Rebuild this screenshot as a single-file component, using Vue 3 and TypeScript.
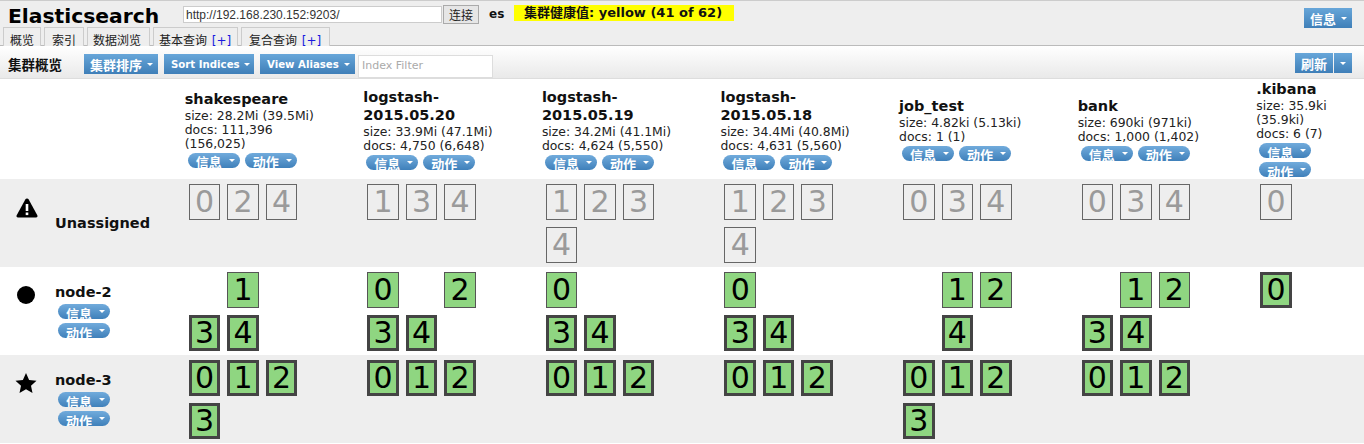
<script setup lang="ts">
type Shard = { n: number; primary?: boolean } | null;
interface Index { name: string[]; size: string; docs: string; stack?: boolean }
const indices: Index[] = [
  { name: ['shakespeare'], size: 'size: 28.2Mi (39.5Mi)', docs: 'docs: 111,396 (156,025)' },
  { name: ['logstash-', '2015.05.20'], size: 'size: 33.9Mi (47.1Mi)', docs: 'docs: 4,750 (6,648)' },
  { name: ['logstash-', '2015.05.19'], size: 'size: 34.2Mi (41.1Mi)', docs: 'docs: 4,624 (5,550)' },
  { name: ['logstash-', '2015.05.18'], size: 'size: 34.4Mi (40.8Mi)', docs: 'docs: 4,631 (5,560)' },
  { name: ['job_test'], size: 'size: 4.82ki (5.13ki)', docs: 'docs: 1 (1)' },
  { name: ['bank'], size: 'size: 690ki (971ki)', docs: 'docs: 1,000 (1,402)' },
  { name: ['.kibana'], size: 'size: 35.9ki (35.9ki)', docs: 'docs: 6 (7)', stack: true },
];
const s = (n: number): Shard => ({ n });
const p = (n: number): Shard => ({ n, primary: true });
const rows: { label: string; kind: string; actions: boolean; cells: Shard[][]; unassigned?: boolean }[] = [
  {
    label: 'Unassigned', kind: 'warn', actions: false, unassigned: true,
    cells: [
      [s(0), s(2), s(4)], [s(1), s(3), s(4)], [s(1), s(2), s(3), s(4)], [s(1), s(2), s(3), s(4)],
      [s(0), s(3), s(4)], [s(0), s(3), s(4)], [s(0)],
    ],
  },
  {
    label: 'node-2', kind: 'circle', actions: true,
    cells: [
      [null, s(1), null, p(3), p(4)], [s(0), null, s(2), p(3), p(4)], [s(0), null, null, p(3), p(4)],
      [s(0), null, null, p(3), p(4)], [null, s(1), s(2), null, p(4)], [null, s(1), s(2), p(3), p(4)], [p(0)],
    ],
  },
  {
    label: 'node-3', kind: 'star', actions: true,
    cells: [
      [p(0), p(1), p(2), p(3)], [p(0), p(1), p(2)], [p(0), p(1), p(2)], [p(0), p(1), p(2)],
      [p(0), p(1), p(2), p(3)], [p(0), p(1), p(2)], [],
    ],
  },
];
</script>

<template>
  <div class="page">
    <header class="top">
      <div class="top-row">
        <h1 class="title">Elasticsearch</h1>
        <input class="url" value="http://192.168.230.152:9203/" />
        <button class="connect">连接</button>
        <span class="cluster">es</span>
        <span class="health">集群健康值: yellow (41 of 62)</span>
        <button class="tb cjk info-top">信息<i class="caret"></i></button>
      </div>
      <nav class="tabs">
        <span class="tab active">概览</span>
        <span class="tab">索引</span>
        <span class="tab">数据浏览</span>
        <span class="tab">基本查询 <b>[+]</b></span>
        <span class="tab">复合查询 <b>[+]</b></span>
      </nav>
    </header>

    <div class="toolbar">
      <strong class="tool-title">集群概览</strong>
      <button class="tb cjk">集群排序<i class="caret"></i></button>
      <button class="tb">Sort Indices<i class="caret"></i></button>
      <button class="tb">View Aliases<i class="caret"></i></button>
      <input class="filter" placeholder="Index Filter" />
      <div class="refresh">
        <button class="tb cjk split-l">刷新</button>
        <button class="tb split-r"><i class="caret flush"></i></button>
      </div>
    </div>

    <div class="grid head">
      <div></div>
      <div></div>
      <div v-for="ix in indices" :key="ix.name.join('')" class="ix" :class="{ last: ix.stack }">
        <h3 class="ix-name"><span v-for="part in ix.name" :key="part" class="part">{{ part }}</span></h3>
        <div class="ix-line">{{ ix.size }}</div>
        <div class="ix-line">{{ ix.docs }}</div>
        <div class="pills" :class="{ stack: ix.stack }">
          <span class="pill"><span class="pill-text">信息</span><i class="caret"></i></span>
          <span class="pill"><span class="pill-text">动作</span><i class="caret"></i></span>
        </div>
      </div>
    </div>

    <div v-for="(row, ri) in rows" :key="row.label" class="grid row" :class="{ tint: ri !== 1 }">
      <div class="icon-cell">
        <svg v-if="row.kind === 'warn'" width="22" height="20" viewBox="0 0 22 20">
          <path d="M11 0.5c.8 0 1.3.4 1.7 1.1l8.6 15.6c.6 1.1 0 2.3-1.3 2.3H2c-1.3 0-1.9-1.2-1.3-2.3L9.300 1.600C9.700.9 10.200.5 11 .5z" fill="#000" />
          <rect x="9.700" y="6" width="2.600" height="7" fill="#fff" />
          <rect x="9.700" y="14.500" width="2.600" height="2.600" fill="#fff" />
        </svg>
        <svg v-else-if="row.kind === 'circle'" class="ico-circle" width="18" height="18" viewBox="0 0 18 18">
          <circle cx="9" cy="9" r="9" fill="#000" />
        </svg>
        <svg v-else class="ico-star" width="22" height="20" viewBox="0 0 22 20">
          <path d="M11 0l3.100 6.900 7.400.8-5.500 5 1.500 7.300L11 16.300 4.500 20 6 12.700l-5.500-5 7.400-.8z" fill="#000" />
        </svg>
      </div>
      <div class="node">
        <h3 class="node-name">{{ row.label }}</h3>
        <template v-if="row.actions">
          <span class="pill"><span class="pill-text">信息</span><i class="caret"></i></span>
          <span class="pill"><span class="pill-text">动作</span><i class="caret"></i></span>
        </template>
      </div>
      <div v-for="(cell, ci) in row.cells" :key="ci" class="shards">
        <template v-for="(sh, si) in cell" :key="si">
          <span v-if="sh" class="shard" :class="{ un: row.unassigned, primary: sh.primary }">{{ sh.n }}</span>
          <span v-else class="shard blank"></span>
        </template>
      </div>
    </div>
  </div>
</template>

<style scoped>
.page {
  width: 1364px;
  height: 444px;
  overflow: hidden;
  background: #fff;
  font-family: "DejaVu Sans", "Noto Sans CJK SC", sans-serif;
  font-size: 12px;
  color: #111;
}
.top {
  height: 46px;
  box-sizing: border-box;
  background: #eee;
  border-top: 1px solid #ccc;
  border-bottom: 1px solid #bbb;
  position: relative;
}
.top-row {
  display: flex;
  align-items: flex-start;
  height: 24px;
}
.title {
  margin: 3px 0 0 8px;
  width: 175px;
  font-size: 20.300px;
  line-height: 24px;
  font-weight: bold;
  color: #000;
  white-space: nowrap;
}
.url {
  width: 259px;
  height: 17px;
  margin-top: 5px;
  box-sizing: border-box;
  border: 1px solid #ccc;
  background: #fff;
  padding: 0 2px;
  font: 12px "Liberation Sans", sans-serif;
  color: #333;
  outline: none;
}
.connect {
  width: 36px;
  height: 19px;
  margin: 4px 0 0 1px;
  padding: 0;
  box-sizing: border-box;
  border: 1px solid #aaa;
  background: #e6e6e6;
  font: 12px "Noto Sans CJK SC", sans-serif;
  color: #222;
}
.cluster {
  margin: 5px 0 0 10px;
  width: 25px;
  font-weight: bold;
  line-height: 16px;
}
.health {
  margin-top: 4px;
  width: 220px;
  height: 16px;
  line-height: 16px;
  box-sizing: border-box;
  padding-left: 10px;
  background: #ff0;
  font-weight: bold;
  font-size: 13px;
  white-space: nowrap;
}
.info-top {
  position: absolute;
  top: 7px;
  right: 12px;
  width: 48px;
}
.tabs {
  display: flex;
  position: absolute;
  left: 3px;
  bottom: -1px;
  height: 19px;
}
.tab {
  box-sizing: border-box;
  height: 19px;
  line-height: 23px;
  padding: 0 6px;
  margin-right: 3px;
  border: 1px solid #ccc;
  border-bottom: 0;
  background: #eee;
  font-family: "Noto Sans CJK SC", sans-serif;
  font-size: 12px;
  color: #222;
  white-space: nowrap;
}
.tab:nth-child(1) { width: 38px; }
.tab:nth-child(2) { width: 40px; padding-left: 7px; }
.tab:nth-child(3) { width: 63px; padding-left: 5px; }
.tab:nth-child(4) { width: 85px; padding-left: 5px; }
.tab:nth-child(5) { width: 89px; padding-left: 7px; }
.tab b {
  font-weight: normal;
  color: #1a1ae0;
  font-family: "DejaVu Sans", sans-serif;
  font-size: 12px;
  margin-left: 2px;
}
.toolbar {
  height: 33px;
  box-sizing: border-box;
  display: flex;
  align-items: flex-start;
  padding: 8px 12px 0 8px;
  gap: 6px;
  background: linear-gradient(#fff, #e9e9e9);
  border-bottom: 1px solid #ddd;
}
.tool-title {
  width: 70px;
  line-height: 20px;
  font-family: "Noto Sans CJK SC", sans-serif;
  font-weight: bold;
  font-size: 13.500px;
  white-space: nowrap;
}
.tb {
  height: 20px;
  padding: 0 0 0 7px;
  box-sizing: border-box;
  border: 0;
  background: linear-gradient(#67a6d9, #3f7fb8);
  color: #fff;
  font-family: "DejaVu Sans", "Noto Sans CJK SC", sans-serif;
  font-size: 10.200px;
  font-weight: bold;
  text-align: left;
  white-space: nowrap;
  display: inline-flex;
  align-items: center;
  justify-content: space-between;
}
.tb.cjk { font-size: 13px; padding-left: 6px; }
.toolbar > .tb:nth-of-type(1) { width: 74px; }
.toolbar > .tb:nth-of-type(2) { width: 90px; }
.toolbar > .tb:nth-of-type(3) { width: 95px; }
.caret {
  display: inline-block;
  width: 0;
  height: 0;
  margin: 0 5px 0 4px;
  border-left: 3.500px solid transparent;
  border-right: 3.500px solid transparent;
  border-top: 3.500px solid #fff;
  flex: none;
}
.caret.flush { margin: 0 auto; }
.filter {
  width: 135px;
  height: 23px;
  margin: 1px 0 0 -3px;
  box-sizing: border-box;
  border: 1px solid #ddd;
  padding: 0 3px 3px;
  font: 11px "DejaVu Sans", sans-serif;
  background: #fff;
  outline: none;
}
.filter::placeholder { color: #aaa; }
.refresh {
  margin-left: auto;
  display: flex;
  gap: 1px;
  margin-top: -1px;
}
.split-l { width: 38px; }
.split-r { width: 18px; padding: 0; justify-content: center; }
.grid {
  display: grid;
  grid-template-columns: 55px 129.700px repeat(6, 178.600px) 107.700px;
}
.head {
  height: 100px;
  align-items: center;
  box-sizing: border-box;
}
.ix { min-width: 0; padding-right: 40px; }
.ix.last { padding-right: 0; }
.ix-name {
  margin: -1px 0 1px;
  font-size: 14.500px;
  line-height: 18px;
  font-weight: bold;
  color: #111;
}
.part { display: block; }
.ix-line { line-height: 14px; font-size: 12.400px; color: #222; }
.pills { display: flex; gap: 5px; margin: 2px 0 0 3px; }
.pills.stack { flex-direction: column; gap: 4px; }
.pill {
  width: 52px;
  height: 15px;
  box-sizing: border-box;
  border-radius: 8px;
  padding-left: 8px;
  overflow: hidden;
  display: inline-flex;
  align-items: center;
  justify-content: space-between;
  background: linear-gradient(#71abdc, #3f80ba);
  color: #fff;
  font-family: "Noto Sans CJK SC", sans-serif;
  font-size: 13px;
  font-weight: bold;
  flex: none;
}
.pill-text { line-height: 17px; padding-top: 3px; }
.row { height: 88px; box-sizing: border-box; }
.row.tint { background: #eee; }
.icon-cell { padding: 19px 0 0 16px; }
.icon-cell svg { display: block; }
.ico-circle { margin-left: 1px; }
.ico-star { margin: -1px 0 0 -1px; }
.node {
  align-self: center;
  display: flex;
  flex-direction: column;
  align-items: flex-start;
  gap: 4px;
  margin-top: -1px;
}
.node .pill { margin-left: 3px; }
.node .node-name { margin-bottom: -1px; }
.node-name {
  margin: 0;
  font-size: 14.500px;
  line-height: 18px;
  font-weight: bold;
  color: #111;
}
.shards {
  display: flex;
  flex-wrap: wrap;
  align-content: flex-start;
  width: 120px;
  column-gap: 7px;
  row-gap: 7px;
  padding: 5px 0 0 4px;
  box-sizing: border-box;
}
.shard {
  width: 31.500px;
  height: 36px;
  box-sizing: border-box;
  border: 1px solid #555;
  background: #8fd681;
  color: #000;
  font-size: 30px;
  line-height: 34px;
  text-align: center;
}
.shard.primary { border: 3px solid #444; line-height: 30px; }
.shard.un { background: transparent; color: #9a9a9a; border-color: #666; }
.shard.blank { background: transparent; border-color: transparent; }
</style>
